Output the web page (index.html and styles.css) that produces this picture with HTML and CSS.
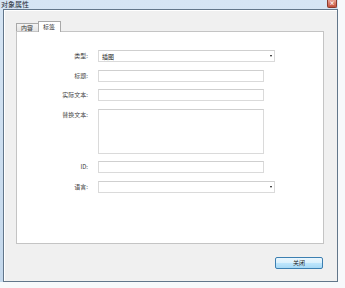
FILE: index.html
```html
<!DOCTYPE html>
<html lang="zh-CN">
<head>
<meta charset="utf-8">
<title>对象属性</title>
<link rel="stylesheet" href="styles.css">
</head>
<body>
<div class="window">
  <div class="titlebar">
    <span class="title">对象属性</span>
    <span class="close">×</span>
  </div>
  <div class="client">
    <div class="tabs">
      <div class="tab">内容</div>
      <div class="tab active">标签</div>
    </div>
    <div class="panel">
      <div class="form">
        <div class="row"><label class="lbl">类型:</label><div class="select"><span>插图</span><i class="arrow"></i></div></div>
        <div class="row"><label class="lbl">标题:</label><div class="input"></div></div>
        <div class="row"><label class="lbl">实际文本:</label><div class="input"></div></div>
        <div class="row"><label class="lbl">替换文本:</label><div class="input area"></div></div>
        <div class="row"><label class="lbl">ID:</label><div class="input"></div></div>
        <div class="row"><label class="lbl">语言:</label><div class="select"><span></span><i class="arrow"></i></div></div>
      </div>
    </div>
    <div class="footer">
      <button class="btn">关闭</button>
    </div>
  </div>
</div>
</body>
</html>
```
FILE: styles.css
```css
* { box-sizing: border-box; }
html, body { margin: 0; padding: 0; }
body {
  width: 345px;
  height: 288px;
  background: #f7f9fb;
  font-family: "Noto Sans CJK SC", "Liberation Sans", sans-serif;
  overflow: hidden;
}
.window {
  width: 338px;
  height: 282px;
  padding-left: 3px;
  background: linear-gradient(#d6e5f4, #c4d8ec);
  display: flex;
  flex-direction: column;
}
.titlebar {
  height: 9px;
  display: flex;
  justify-content: space-between;
  align-items: flex-start;
}
.title {
  font-size: 7px;
  line-height: 8px;
  color: #1e2a36;
  margin-left: -2px;
}
.close {
  width: 10px;
  height: 8px;
  margin-right: 1px;
  background: linear-gradient(#e8a092, #c4503a);
  border: 1px solid #8a3a2c;
  border-top: none;
  border-radius: 0 0 2px 2px;
  color: #fff;
  font-family: "DejaVu Sans", sans-serif;
  font-size: 6px;
  line-height: 6px;
  text-align: center;
  font-weight: bold;
}
.client {
  flex: 1;
  border: 1px solid #62768a;
  box-shadow: inset 1px 1px 0 #ffffff;
  background: #f0f0f0;
  padding: 11px 13px 0 12px;
  display: flex;
  flex-direction: column;
}
.tabs {
  display: flex;
  align-items: flex-end;
  height: 10px;
  position: relative;
  z-index: 1;
}
.tab {
  font-size: 6px;
  line-height: 6px;
  color: #333;
  height: 8px;
  padding: 1px 4px 0 4px;
  border: 1px solid #a9a9a9;
  border-bottom: none;
  background: linear-gradient(#f4f4f4, #e4e4e4);
  width: 23px;
}
.tab.active {
  height: 11px;
  margin-bottom: -1px;
  margin-left: -1px;
  width: 23px;
  background: #fff;
  padding-top: 2px;
}
.panel {
  height: 213px;
  background: #fff;
  border: 1px solid #c4c4c4;
  padding-top: 18px;
}
.form {
  display: flex;
  flex-direction: column;
  gap: 7.6px;
}
.row {
  display: flex;
  align-items: flex-start;
  gap: 10px;
}
.lbl {
  width: 71px;
  text-align: right;
  font-size: 6px;
  line-height: 12px;
  color: #444;
}
.input, .select {
  height: 12px;
  border: 1px solid #dadada;
  border-top-color: #cfcfcf;
  background: #fff;
}
.input { width: 166px; }
.input.area { height: 45px; }
.select {
  width: 177px;
  display: flex;
  align-items: center;
  justify-content: space-between;
  padding: 0 2px 0 3px;
  font-size: 6px;
  color: #222;
}
.arrow {
  width: 0;
  height: 0;
  border-left: 1.5px solid transparent;
  border-right: 1.5px solid transparent;
  border-top: 2px solid #111;
}
.footer {
  flex: 1;
  display: flex;
  justify-content: flex-end;
  align-items: flex-start;
  padding-top: 13px;
}
.btn {
  width: 48px;
  height: 12px;
  margin-right: 1px;
  padding: 0;
  border: 1px solid #3c7fb1;
  border-radius: 2px;
  background: linear-gradient(#eaf6fd 0%, #d9f0fc 50%, #bee6fd 51%, #a7d9f5 100%);
  font-family: "Noto Sans CJK SC", sans-serif;
  font-size: 6px;
  line-height: 10px;
  color: #222;
}
```
